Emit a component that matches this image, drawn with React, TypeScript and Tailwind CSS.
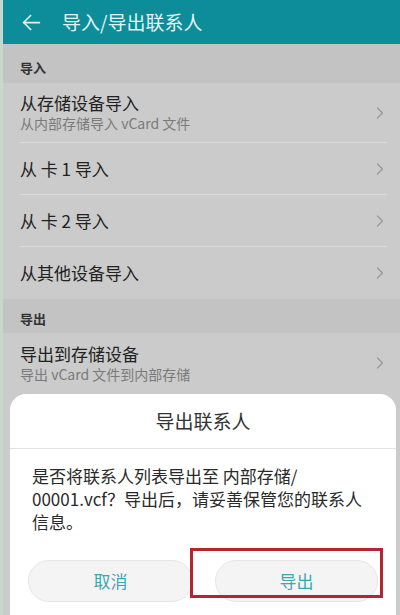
import { ChevronRight } from 'lucide-react';

const font = { fontFamily: '"Noto Sans CJK SC", "Noto Sans", sans-serif' };

function Row({ title, sub, last }: { title: string; sub?: string; last?: boolean }) {
  return (
    <div className={`ml-[17px] mr-[13px] flex items-center justify-between ${sub ? 'h-[60px]' : 'h-[52px]'} ${last ? '' : 'border-b border-[#dadada]'}`}>
      <div className="flex flex-col">
        <span className="text-[17px] leading-[22px] text-[#222]">{title}</span>
        {sub && <span className="text-[14px] leading-[19px] text-[#7a7a7a]">{sub}</span>}
      </div>
      <ChevronRight className="w-5 h-5 text-[#9a9a9a] -mr-[3px]" strokeWidth={1.5} />
    </div>
  );
}

function SectionHeader({ label, h }: { label: string; h: string }) {
  return (
    <div className={`${h} bg-[#c3c3c3] pl-[17px] flex items-center text-[13px] font-bold text-[#333]`}>
      {label}
    </div>
  );
}

export default function App() {
  return (
    <div className="relative w-[400px] h-[615px] overflow-hidden bg-[#cbcbcb] border-l-[3px] border-[#c6d8cb]" style={font}>
      {/* Toolbar */}
      <div className="h-[44px] bg-[#0c8d99] flex items-center -ml-[3px]">
        <svg className="ml-[21px] w-[21px] h-[21px]" viewBox="0 0 24 24" fill="none" stroke="#e4f3f3" strokeWidth={2} strokeLinecap="round" strokeLinejoin="round">
          <path d="M21 12H3" />
          <path d="M11 4l-8 8 8 8" />
        </svg>
        <span className="ml-[20px] text-[19px] text-[#e4f3f3]">导入/导出联系人</span>
      </div>

      <SectionHeader label="导入" h="h-[39px] pt-[8px]" />
      <Row title="从存储设备导入" sub="从内部存储导入 vCard 文件" />
      <Row title="从 卡 1 导入" />
      <Row title="从 卡 2 导入" />
      <Row title="从其他设备导入" last />

      <SectionHeader label="导出" h="h-[34px] pt-[6px]" />
      <Row title="导出到存储设备" sub="导出 vCard 文件到内部存储" last />

      {/* Confirm dialog */}
      <div className="absolute left-[7px] right-[4px] top-[394px] bottom-0 bg-white rounded-t-[16px] flex flex-col">
        <div className="h-[55px] flex items-center justify-center text-[19px] text-[#333] border-b border-[#e2e2e2]">
          导出联系人
        </div>
        <p className="px-[22px] pt-[15px] text-[17px] leading-[23px] text-[#2a2a2a]">
          是否将联系人列表导出至 内部存储/
          <br />
          00001.vcf？导出后，请妥善保管您的联系人信息。
        </p>
        <div className="mt-auto mb-[13px] flex items-center gap-[22px] px-[18px]">
          <button className="flex-1 h-[42px] rounded-full bg-[#f4f4f4] border border-[#e6e6e6] text-[17px] text-[#3fa4b1]">
            取消
          </button>
          <div className="flex-1 relative">
            <button className="w-full h-[42px] rounded-full bg-[#f4f4f4] border border-[#e6e6e6] text-[17px] text-[#3fa4b1]">
              导出
            </button>
            <div className="absolute -left-[25px] -right-[5px] -top-[12px] bottom-[4px] border-[3px] border-[#b3262f]" />
          </div>
        </div>
      </div>
    </div>
  );
}
